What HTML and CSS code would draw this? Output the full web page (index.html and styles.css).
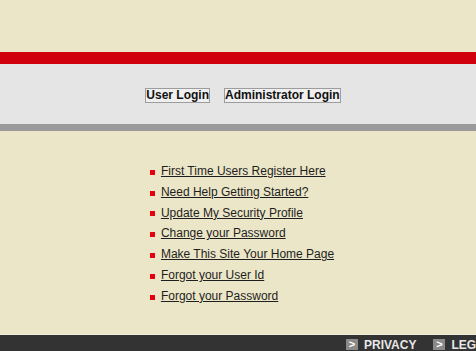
FILE: index.html
```html
<!DOCTYPE html>
<html lang="en">
<head>
    <meta charset="UTF-8">
    <meta name="viewport" content="width=device-width, initial-scale=1.0">
    <title>Login</title>
    <link rel="stylesheet" href="styles.css">
</head>
<body>
    <div class="top-space"></div>
    <div class="red-bar"></div>

    <div class="login-band">
        <button type="button" class="login-btn">User Login</button>
        <button type="button" class="login-btn">Administrator Login</button>
    </div>
    <div class="grey-bar"></div>

    <div class="content">
        <ul class="links">
            <li><a href="#">First Time Users Register Here</a></li>
            <li><a href="#">Need Help Getting Started?</a></li>
            <li><a href="#">Update My Security Profile</a></li>
            <li><a href="#">Change your Password</a></li>
            <li><a href="#">Make This Site Your Home Page</a></li>
            <li><a href="#">Forgot your User Id</a></li>
            <li><a href="#">Forgot your Password</a></li>
        </ul>
    </div>

    <div class="footer">
        <a href="#" class="footer-link"><span class="arrow">&gt;</span>PRIVACY</a>
        <a href="#" class="footer-link"><span class="arrow">&gt;</span>LEGAL</a>
    </div>
</body>
</html>
```

FILE: styles.css
```css
:root {
    --beige: #ece6c8;
    --red: #d0000c;
    --band: #e5e5e5;
    --rule: #9a9a9a;
    --footer: #333333;
}

* {
    margin: 0;
    padding: 0;
    box-sizing: border-box;
}

body {
    background: var(--beige);
    font-family: 'Liberation Sans', Arial, sans-serif;
    color: #1e1e1e;
    height: 351px;
    overflow: hidden;
    display: flex;
    flex-direction: column;
}

.top-space {
    height: 52px;
}

.red-bar {
    height: 12px;
    background: var(--red);
}

.login-band {
    height: 60px;
    background: var(--band);
    display: flex;
    justify-content: center;
    align-items: center;
    gap: 14px;
    padding-left: 10px;
    padding-top: 2px;
}

.login-btn {
    font-family: 'Liberation Sans', Arial, sans-serif;
    font-size: 12px;
    font-weight: 700;
    line-height: 13px;
    color: #111;
    background: #efefef;
    border: 1px solid #9c9c9c;
    padding: 0;
    cursor: pointer;
}

.grey-bar {
    height: 7px;
    background: var(--rule);
}

.content {
    flex: 1;
    display: flex;
    justify-content: center;
    padding: 30px 0 0 8px;
}

.links {
    list-style: none;
    font-size: 12px;
    line-height: 20.8px;
}

.links li {
    display: flex;
    align-items: center;
}

.links li::before {
    content: "";
    width: 5px;
    height: 5px;
    background: #e3000f;
    margin: 2px 6px 0 0;
}

.links a {
    color: #1e1e1e;
    text-decoration: underline;
}

.footer {
    height: 17px;
    background: var(--footer);
    border-top: 1px solid #f4efdc;
    display: flex;
    gap: 17px;
    padding: 2px 0 0 346px;
    white-space: nowrap;
}

.footer-link {
    display: flex;
    align-items: flex-start;
    gap: 6px;
    color: #e8e8e8;
    font-size: 12px;
    font-weight: 700;
    line-height: 17px;
    text-decoration: none;
}

.arrow {
    width: 12px;
    height: 11px;
    margin-top: 2px;
    background: #8a8a8a;
    color: #fff;
    font-size: 11px;
    line-height: 11px;
    text-align: center;
}
```
